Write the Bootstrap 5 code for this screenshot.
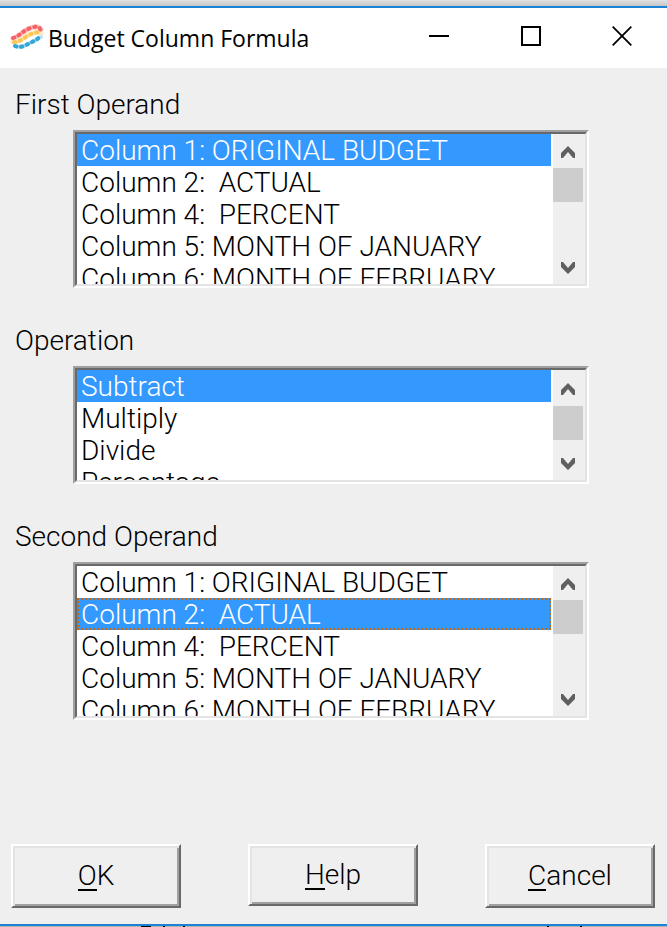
<!DOCTYPE html>
<html lang="en">
<head>
<meta charset="utf-8">
<meta name="viewport" content="width=device-width, initial-scale=1">
<title>Budget Column Formula</title>
<link href="https://cdn.jsdelivr.net/npm/bootstrap@5.3.0/dist/css/bootstrap.min.css" rel="stylesheet">
<style>
  body { background: #efefef; color: #000; font-family: Roboto, "Liberation Sans", sans-serif; font-weight: 300; font-size: 28px; line-height: 32px; }
  .desk-top { height: 6px; background: linear-gradient(#e2e2e2, #c6c6c6); }
  .desk-bottom { height: 1px; background: linear-gradient(90deg, #b4b4b4 141px, #000 141px 151px, #b4b4b4 151px 163px, #000 163px 165px, #b4b4b4 165px 183px, #000 183px 185px, #b4b4b4 185px 547px, #000 547px 549px, #b4b4b4 549px 580px, #000 580px 582px, #b4b4b4 582px); }
  .dialog-win { border-top: 2px solid #1c82d4; border-bottom: 2px solid #1c82d4; }
  .title-bar { height: 60px; padding-left: 10px; }
  .title-bar h1 { font: 400 23px/32px "Open Sans", "Noto Sans", sans-serif; margin-left: 4px; }
  .win-btn { width: 92px; height: 56px; border: 0; background: none; padding: 0 0 4px; }
  .win-btn:last-child { width: 90px; }
  .form-area { padding: 20px 12px 16px 11px; }
  .field-group { margin-bottom: 36px; }
  .field-label { margin: 0 0 8px 4px; line-height: 34px; }
  .list-frame { margin: 0 66px 0 62px; border: 2px solid; border-color: #a0a0a0 #fff #fff #a0a0a0; }
  .list-inner { height: 154px; border: 2px solid; border-color: #696969 #e3e3e3 #e3e3e3 #696969; background: #fff; }
  .list-short { height: 114px; }
  .list-box { border: 0; border-radius: 0; padding: 0; margin-right: 2px; height: 100%; overflow: hidden; background: #fff; color: #000; outline: 0; font: inherit; }
  .list-box option { height: 32px; min-height: 32px; line-height: 32px; padding: 0 0 0 4px; font-weight: 300; }
  .list-box option:checked { background: #3399ff linear-gradient(#3399ff, #3399ff); color: #fff; }
  .show-focus option:checked { outline: 2px dotted #c8680c; outline-offset: -2px; }
  .scroll-rail { width: 32px; background: #efefef; }
  .scroll-rail button { height: 34px; width: 30px; border: 0; background: none; padding: 0 0 2px; }
  .list-short .scroll-rail button:first-child { height: 36px; }
  .scroll-thumb { width: 30px; height: 34px; background: #cdcdcd; }
  .push-btn { width: 170px; height: 64px; padding: 0; background: #efefef; color: #000; font: inherit; border: 2px solid; border-color: #fff #696969 #696969 #fff; box-shadow: inset 2px 2px #e3e3e3, inset -2px -2px #a0a0a0; }
  .push-short { height: 62px; }
  .push-btn span { border-bottom: 2px solid #000; display: inline-block; line-height: 26px; }
</style>
</head>
<body class="d-flex flex-column min-vh-100">
<div class="desk-top"></div>
<main class="dialog-win d-flex flex-column flex-grow-1">
  <header class="title-bar d-flex align-items-center bg-white">
    <svg width="34" height="28" viewBox="0 0 34 28" fill="none" stroke-linecap="round" stroke-dasharray="1.5 4.5" aria-hidden="true">
      <path d="M3 15C10 12 13 6 22 3.500S29 5 31 6" stroke="#ffc9c4" stroke-width="5" stroke-dasharray="none"/>
      <path d="M3 18C11 18 14 13 21 10S28 9 31 9" stroke="#ffe9c0" stroke-width="5" stroke-dasharray="none"/>
      <path d="M5 22C12 25 17 20 22 18S28 14 31 13" stroke="#bfe3f3" stroke-width="4" stroke-dasharray="none"/>
      <path d="M3 14C10 12 13 6 22 3.500S29 5 31 6" stroke="#f9616a" stroke-width="4"/>
      <path d="M4 18C11 18 14 13 21 10S28 9 31 9" stroke="#fcc75a" stroke-width="4"/>
      <path d="M5 22C12 25 17 20 22 18S28 14 31 12" stroke="#35a7d6" stroke-width="4"/>
    </svg>
    <h1 class="mb-0 me-auto">Budget Column Formula</h1>
    <div class="d-flex align-self-start">
      <button class="win-btn" type="button" aria-label="Minimize"><svg width="20" height="20" aria-hidden="true"><path d="M0 10H20" stroke="#000" stroke-width="2"/></svg></button>
      <button class="win-btn" type="button" aria-label="Maximize"><svg width="20" height="20" aria-hidden="true"><path d="M1 1H19V19H1Z" fill="none" stroke="#000" stroke-width="2"/></svg></button>
      <button class="win-btn" type="button" aria-label="Close"><svg width="20" height="20" aria-hidden="true"><path d="M.7 .7L19.3 19.3M19.3 .7L.7 19.3" stroke="#000" stroke-width="1.8"/></svg></button>
    </div>
  </header>
  <form class="form-area d-flex flex-column flex-grow-1">
    <div class="field-group">
      <label class="field-label d-block" for="first">First Operand</label>
      <div class="list-frame"><div class="list-inner d-flex">
        <select class="list-box flex-grow-1" id="first" size="5">
          <option selected>Column 1: ORIGINAL BUDGET</option>
          <option>Column 2:&nbsp; ACTUAL</option>
          <option>Column 4:&nbsp; PERCENT</option>
          <option>Column 5: MONTH OF JANUARY</option>
          <option>Column 6: MONTH OF FEBRUARY</option>
        </select>
        <div class="scroll-rail d-flex flex-column">
          <button type="button" aria-label="Scroll up"><svg width="14" height="12" aria-hidden="true"><path d="M7 0L14 7V12H12L7 6L2 12H0V7Z" fill="#606060"/></svg></button>
          <div class="scroll-thumb"></div>
          <button class="mt-auto" type="button" aria-label="Scroll down"><svg width="14" height="12" aria-hidden="true"><path d="M7 12L14 5V0H12L7 6L2 0H0V5Z" fill="#606060"/></svg></button>
        </div>
      </div></div>
    </div>
    <div class="field-group">
      <label class="field-label d-block" for="operation">Operation</label>
      <div class="list-frame"><div class="list-inner list-short d-flex">
        <select class="list-box flex-grow-1" id="operation" size="4">
          <option selected>Subtract</option>
          <option>Multiply</option>
          <option>Divide</option>
          <option>Percentage</option>
        </select>
        <div class="scroll-rail d-flex flex-column">
          <button type="button" aria-label="Scroll up"><svg width="14" height="12" aria-hidden="true"><path d="M7 0L14 7V12H12L7 6L2 12H0V7Z" fill="#606060"/></svg></button>
          <div class="scroll-thumb"></div>
          <button class="mt-auto" type="button" aria-label="Scroll down"><svg width="14" height="12" aria-hidden="true"><path d="M7 12L14 5V0H12L7 6L2 0H0V5Z" fill="#606060"/></svg></button>
        </div>
      </div></div>
    </div>
    <div class="field-group">
      <label class="field-label d-block" for="second">Second Operand</label>
      <div class="list-frame"><div class="list-inner d-flex">
        <select class="list-box show-focus flex-grow-1" id="second" size="5">
          <option>Column 1: ORIGINAL BUDGET</option>
          <option selected>Column 2:&nbsp; ACTUAL</option>
          <option>Column 4:&nbsp; PERCENT</option>
          <option>Column 5: MONTH OF JANUARY</option>
          <option>Column 6: MONTH OF FEBRUARY</option>
        </select>
        <div class="scroll-rail d-flex flex-column">
          <button type="button" aria-label="Scroll up"><svg width="14" height="12" aria-hidden="true"><path d="M7 0L14 7V12H12L7 6L2 12H0V7Z" fill="#606060"/></svg></button>
          <div class="scroll-thumb"></div>
          <button class="mt-auto" type="button" aria-label="Scroll down"><svg width="14" height="12" aria-hidden="true"><path d="M7 12L14 5V0H12L7 6L2 0H0V5Z" fill="#606060"/></svg></button>
        </div>
      </div></div>
    </div>
    <div class="d-flex justify-content-between align-items-start mt-auto">
      <button class="push-btn" type="button"><span>O</span>K</button>
      <button class="push-btn push-short" type="button"><span>H</span>elp</button>
      <button class="push-btn" type="button"><span>C</span>ancel</button>
    </div>
  </form>
</main>
<div class="desk-bottom"></div>
<script src="https://cdn.jsdelivr.net/npm/bootstrap@5.3.0/dist/js/bootstrap.bundle.min.js"></script>
</body>
</html>
